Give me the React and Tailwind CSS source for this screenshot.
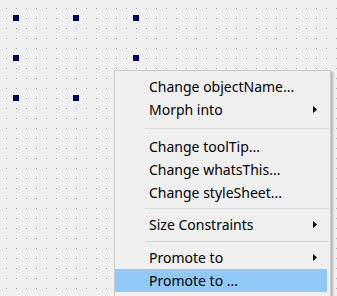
import React from "react";

const Arrow = () => (
  <svg width="4" height="7" viewBox="0 0 4 7" className="block">
    <path d="M0 0 L4 3.5 L0 7 Z" fill="#000" />
  </svg>
);

const Item = ({ label, arrow, active, first }) => (
  <div
    className={
      "flex items-center h-[23px] mr-[3px] pl-[34px] pr-[10px] text-[14px] leading-none text-black " +
      (active ? "bg-[#91c9f7]" : "")
    }
  >
    <span className="flex-1 whitespace-nowrap">{label}</span>
    {arrow ? <Arrow /> : null}
  </div>
);

const Sep = ({ h }) => (
  <div className={"flex items-center " + h}>
    <div className="ml-[30px] mr-[1px] h-px flex-1 bg-[#d7d7d7]" />
  </div>
);

export default function App() {
  const handles = [
    [13, 15],
    [73, 15],
    [133, 15],
    [13, 55],
    [133, 55],
    [13, 95],
    [73, 95],
  ];
  return (
    <div
      className="relative w-[337px] h-[296px] overflow-hidden bg-[#f0f0f0]"
      style={{ fontFamily: '"Noto Sans", "Open Sans", sans-serif' }}
    >
      <svg width="337" height="296" className="block">
        <defs>
          <pattern id="g" x="6" y="8" width="10" height="10" patternUnits="userSpaceOnUse">
            <rect x="0" y="0" width="1" height="1" fill="#a9a9a9" />
          </pattern>
        </defs>
        <rect width="337" height="296" fill="url(#g)" />
      </svg>
      {handles.map(([x, y], i) => (
        <div
          key={i}
          className="absolute w-[6px] h-[6px] bg-[#000060]"
          style={{ left: x, top: y }}
        />
      ))}
      <div className="absolute left-[114px] top-[70px] w-[217px] border border-[#cccccc] bg-[#f0f0f0] pt-[4px] pb-[4px] shadow-[2px_2px_2px_rgba(0,0,0,0.25)]">
        <Item label="Change objectName..." />
        <Item label="Morph into" arrow />
        <Sep h="h-[14px]" />
        <Item label="Change toolTip..." />
        <Item label="Change whatsThis..." />
        <Item label="Change styleSheet..." />
        <Sep h="h-[9px]" />
        <Item label="Size Constraints" arrow />
        <Sep h="h-[10px]" />
        <Item label="Promote to" arrow />
        <Item label="Promote to ..." active />
        <Item label="" />
      </div>
    </div>
  );
}
